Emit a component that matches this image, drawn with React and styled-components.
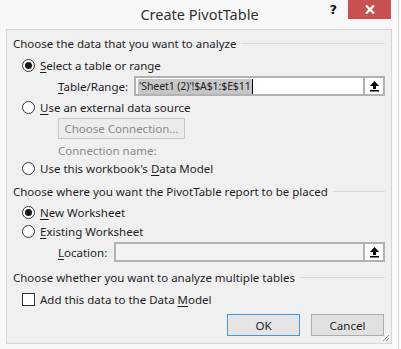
import React from "react";
import styled, { createGlobalStyle } from "styled-components";

const Global = createGlobalStyle`
  html, body { margin: 0; padding: 0; background: #f7f8f7; }
  body { font-family: "Noto Sans", "Open Sans", sans-serif; font-size: 11.5px; color: #1e1e1e; }
  * { box-sizing: border-box; }
`;

const Screen = styled.div`
  width: 401px;
  height: 349px;
  display: flex;
  overflow: hidden;
`;

const Dialog = styled.div`
  width: 393px;
  display: flex;
  flex-direction: column;
  padding: 0 1px 5px 6px;
  background: #f7f8f7;
`;

const Strip = styled.div`
  flex: 1;
  background: #fbfbfb;
  border-right: 1px solid #fff;
  position: relative;
  &::after {
    content: "";
    position: absolute;
    top: 0;
    bottom: 0;
    right: 1px;
    width: 1px;
    background: #d6d6d6;
  }
`;

const TitleBar = styled.div`
  height: 29px;
  display: grid;
  grid-template-columns: 1fr auto 1fr;
  align-items: start;
  margin-left: -6px;
`;

const Title = styled.div`
  grid-column: 2;
  font-size: 14.5px;
  color: #333;
  line-height: 20px;
  padding-top: 4px;
  padding-left: 7px;
`;

const Controls = styled.div`
  grid-column: 3;
  justify-self: end;
  display: flex;
  align-items: flex-start;
  margin-right: 1px;
`;

const Help = styled.div`
  font-family: "DejaVu Sans", sans-serif;
  font-weight: bold;
  font-size: 13px;
  color: #111;
  line-height: 18px;
  padding-top: 1px;
  margin-right: 11px;
`;

const Close = styled.div`
  width: 43px;
  height: 19px;
  background: #c75050;
  display: flex;
  align-items: center;
  justify-content: center;
`;

const Panel = styled.div`
  flex: 1;
  background: #f0f0f0;
  border: 1px solid #d6d6d6;
  padding: 5px 6px 0 6px;
  display: flex;
  flex-direction: column;
  position: relative;
`;

const Heading = styled.div`
  display: flex;
  align-items: center;
  height: 16px;
  margin-top: ${(p) => p.$mt || 0}px;
  white-space: nowrap;
  &::after {
    content: "";
    flex: 1;
    height: 1px;
    background: #d9d9d9;
    margin-left: 5px;
  }
`;

const Option = styled.label`
  display: flex;
  align-items: center;
  height: 18px;
  margin-top: ${(p) => p.$mt || 0}px;
  padding-left: 9px;
  gap: 5px;
  white-space: nowrap;
`;

const Radio = styled.span`
  width: 13px;
  height: 13px;
  border-radius: 50%;
  border: 1px solid #333;
  background: #fff;
  display: flex;
  align-items: center;
  justify-content: center;
  &::after {
    content: "";
    width: 7px;
    height: 7px;
    border-radius: 50%;
    background: ${(p) => (p.$checked ? "#1a1a1a" : "transparent")};
  }
`;

const Check = styled.span`
  width: 13px;
  height: 13px;
  border: 1px solid #333;
  background: #fff;
`;

const Key = styled.span`
  text-decoration: underline;
  text-underline-offset: 2px;
`;

const FieldRow = styled.div`
  display: flex;
  align-items: center;
  margin-top: ${(p) => p.$mt || 0}px;
  padding-left: 45px;
`;

const FieldLabel = styled.span`
  width: ${(p) => p.$w}px;
  white-space: nowrap;
`;

const Field = styled.div`
  flex: 1;
  height: ${(p) => p.$h || 20}px;
  display: flex;
  border: 2px solid #b2b2b2;
  background: ${(p) => (p.$disabled ? "#f3f3f3" : "#fff")};
`;

const FieldText = styled.div`
  flex: 1;
  display: flex;
  align-items: center;
  padding-left: 2px;
  white-space: nowrap;
  overflow: hidden;
`;

const Selected = styled.span`
  background: #c6c6c6;
  color: #222;
  font-size: 10.5px;
  letter-spacing: -0.1px;
  line-height: 15px;
  padding: 0 1px;
  border-right: 1px solid #000;
`;

const Collapse = styled.div`
  width: 20px;
  border-left: 2px solid #b2b2b2;
  background: #fff;
  display: flex;
  align-items: center;
  justify-content: center;
`;

const DisabledButton = styled.div`
  margin-left: 45px;
  margin-top: 2px;
  width: 127px;
  height: 21px;
  border: 1px solid #c8c8c8;
  background: #ececec;
  color: #8a8a8a;
  display: flex;
  align-items: center;
  justify-content: center;
`;

const Muted = styled.div`
  margin-left: 45px;
  margin-top: 4px;
  height: 16px;
  line-height: 16px;
  color: #8a8a8a;
`;

const Buttons = styled.div`
  display: flex;
  justify-content: flex-end;
  gap: 11px;
  margin-top: 6px;
  padding-right: 1px;
`;

const Button = styled.div`
  width: 73px;
  height: 22px;
  display: flex;
  align-items: center;
  justify-content: center;
  background: ${(p) => (p.$default ? "#e5e5e5" : "#e1e1e1")};
  border: 1px solid ${(p) => (p.$default ? "#3c9be8" : "#adadad")};
`;

const Grip = styled.svg`
  position: absolute;
  right: 1px;
  bottom: 1px;
`;

const CollapseIcon = () => (
  <svg width="11" height="12" viewBox="0 0 11 12">
    <path d="M5.5 1 L10 6 L7 6 L7 9 L4 9 L4 6 L1 6 Z" fill="#000" />
    <rect x="1" y="10" width="9" height="1.5" fill="#000" />
  </svg>
);

export default function App() {
  return (
    <>
      <Global />
      <Screen>
        <Dialog>
          <TitleBar>
            <Title>Create PivotTable</Title>
            <Controls>
              <Help>?</Help>
              <Close>
                <svg width="10" height="9" viewBox="0 0 10 9">
                  <path d="M1 0.5 L9 8.5 M9 0.5 L1 8.5" stroke="#fff" strokeWidth="2.2" />
                </svg>
              </Close>
            </Controls>
          </TitleBar>
          <Panel>
            <Heading>Choose the data that you want to analyze</Heading>
            <Option $mt={5}>
              <Radio $checked />
              <span><Key>S</Key>elect a table or range</span>
            </Option>
            <FieldRow $mt={2}>
              <FieldLabel $w={76}><Key>T</Key>able/Range:</FieldLabel>
              <Field>
                <FieldText>
                  <Selected>'Sheet1 (2)'!$A$1:$E$11</Selected>
                </FieldText>
                <Collapse><CollapseIcon /></Collapse>
              </Field>
            </FieldRow>
            <Option $mt={2}>
              <Radio />
              <span><Key>U</Key>se an external data source</span>
            </Option>
            <DisabledButton>Choose Connection...</DisabledButton>
            <Muted>Connection name:</Muted>
            <Option $mt={0}>
              <Radio />
              <span>Use this workbook's <Key>D</Key>ata Model</span>
            </Option>
            <Heading $mt={6}>Choose where you want the PivotTable report to be placed</Heading>
            <Option $mt={4}>
              <Radio $checked />
              <span><Key>N</Key>ew Worksheet</span>
            </Option>
            <Option $mt={1}>
              <Radio />
              <span><Key>E</Key>xisting Worksheet</span>
            </Option>
            <FieldRow $mt={2}>
              <FieldLabel $w={56}><Key>L</Key>ocation:</FieldLabel>
              <Field $disabled>
                <FieldText />
                <Collapse><CollapseIcon /></Collapse>
              </Field>
            </FieldRow>
            <Heading $mt={7}>Choose whether you want to analyze multiple tables</Heading>
            <Option $mt={5}>
              <Check />
              <span>Add this data to the Data <Key>M</Key>odel</span>
            </Option>
            <Buttons>
              <Button $default>OK</Button>
              <Button>Cancel</Button>
            </Buttons>
            <Grip width="8" height="8" viewBox="0 0 8 8">
              <path d="M7 1 L1 7 M7 4 L4 7" stroke="#9a9a9a" strokeWidth="1" />
            </Grip>
          </Panel>
        </Dialog>
        <Strip />
      </Screen>
    </>
  );
}
